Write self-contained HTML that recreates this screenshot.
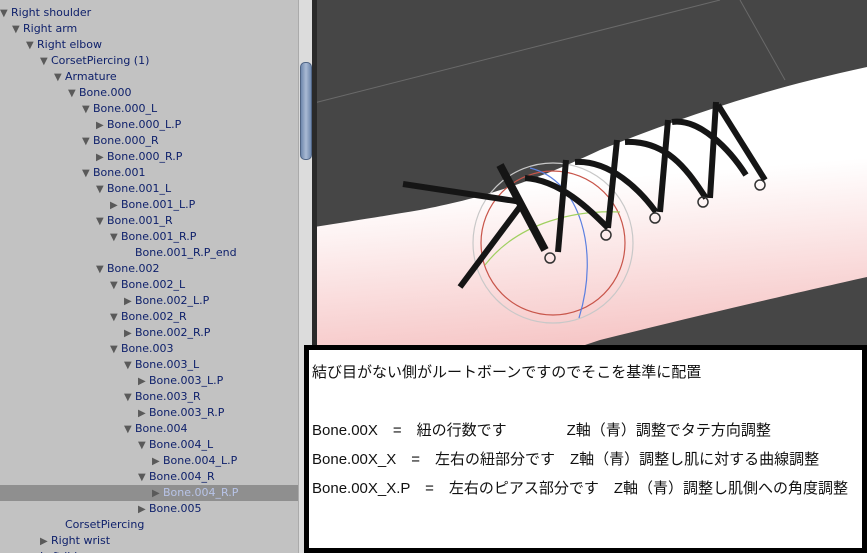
<!DOCTYPE html>
<html><head><meta charset="utf-8"><style>
body{margin:0;width:867px;height:553px;overflow:hidden;position:relative;background:#464646;font-family:"Liberation Sans","DejaVu Sans",sans-serif}
#tree{position:absolute;left:0;top:0;width:298px;height:553px;background:#c2c2c2;overflow:hidden}
.r{position:absolute;height:16px;line-height:16px;font-size:11px;color:#0d1f6a;white-space:nowrap;font-family:"DejaVu Sans",sans-serif}
.r i{font-style:normal;color:#5a5a5a;font-size:10px;display:inline-block;width:10px;margin-right:1px}
.sel{position:absolute;left:0;top:485px;width:298px;height:16px;background:#8f8f8f}
#sb{position:absolute;left:298px;top:0;width:14px;height:553px;background:#dcdcdc;border-left:1px solid #aaa}
#thumb{position:absolute;left:300px;top:62px;width:10px;height:96px;border-radius:5px;background:linear-gradient(90deg,#6f88ad,#a9bad4,#6f88ad);border:1px solid #4f6484}
#split{position:absolute;left:312px;top:0;width:5px;height:553px;background:#2a2a2a}
#box{position:absolute;left:304px;top:345px;width:553px;height:198px;background:#fff;border:5px solid #000;font-family:"Liberation Sans","Noto Sans CJK JP",sans-serif;font-size:15px;color:#111}
#box div{position:absolute;left:3px;white-space:pre}
</style></head><body>
<svg style="position:absolute;left:0;top:0" width="867" height="553">
<defs><linearGradient id="g" x1="0" y1="0" x2="0.15" y2="1"><stop offset="0.45" stop-color="#fff"/><stop offset="1" stop-color="#f6c6c6"/></linearGradient></defs>
<line x1="314" y1="103" x2="720" y2="0" stroke="#6a6a6a" stroke-width="1"/>
<line x1="740" y1="0" x2="785" y2="80" stroke="#6a6a6a" stroke-width="1"/>
<path d="M314 227 C360 220 390 215 420 210 C470 200 520 188 600 150 C680 118 760 90 867 67 L867 277 C800 292 700 315 600 340 L540 360 L314 360 Z" fill="url(#g)"/>
<circle cx="553" cy="243" r="80" fill="none" stroke="#c8c8c8" stroke-width="1.2"/>
<circle cx="553" cy="243" r="72" fill="none" stroke="#c8554a" stroke-width="1.2"/>
<path d="M530 168 C580 180 600 250 579 318" fill="none" stroke="#5b7fe0" stroke-width="1.2"/>
<path d="M485 265 C520 220 580 210 620 212" fill="none" stroke="#a0d060" stroke-width="1.2"/>
<g stroke="#151515" stroke-linecap="butt" fill="none">
<line x1="403" y1="184" x2="522" y2="202" stroke-width="6"/>
<line x1="522" y1="204" x2="460" y2="287" stroke-width="6"/>
<path d="M500 165 L545 250" stroke-width="8"/>
<path d="M558 252 L566 160" stroke-width="6"/>
<path d="M525 178 C560 180 590 210 608 228" stroke-width="6"/>
<path d="M608 228 L617 140" stroke-width="6"/>
<path d="M575 162 C610 160 640 190 656 212" stroke-width="6"/>
<path d="M660 212 L668 120" stroke-width="6"/>
<path d="M625 142 C670 140 690 175 706 198" stroke-width="6"/>
<path d="M710 198 L716 102" stroke-width="6"/>
<path d="M672 122 C700 118 730 150 746 175" stroke-width="6"/>
<path d="M718 105 L765 180" stroke-width="6"/>
</g>
<g stroke="#333" stroke-width="1.5" fill="none">
<circle cx="550" cy="258" r="5"/><circle cx="606" cy="235" r="5"/><circle cx="655" cy="218" r="5"/><circle cx="703" cy="202" r="5"/><circle cx="760" cy="185" r="5"/>
</g>
</svg>
<div id="tree">
<div class="sel"></div>
<div class="r" style="left:0;top:-11px">Neck</div>
<div class="r" style="left:0;top:5px"><i>▼</i>Right shoulder</div>
<div class="r" style="left:12px;top:21px"><i>▼</i>Right arm</div>
<div class="r" style="left:26px;top:37px"><i>▼</i>Right elbow</div>
<div class="r" style="left:40px;top:53px"><i>▼</i>CorsetPiercing (1)</div>
<div class="r" style="left:54px;top:69px"><i>▼</i>Armature</div>
<div class="r" style="left:68px;top:85px"><i>▼</i>Bone.000</div>
<div class="r" style="left:82px;top:101px"><i>▼</i>Bone.000_L</div>
<div class="r" style="left:96px;top:117px"><i>▶</i>Bone.000_L.P</div>
<div class="r" style="left:82px;top:133px"><i>▼</i>Bone.000_R</div>
<div class="r" style="left:96px;top:149px"><i>▶</i>Bone.000_R.P</div>
<div class="r" style="left:82px;top:165px"><i>▼</i>Bone.001</div>
<div class="r" style="left:96px;top:181px"><i>▼</i>Bone.001_L</div>
<div class="r" style="left:110px;top:197px"><i>▶</i>Bone.001_L.P</div>
<div class="r" style="left:96px;top:213px"><i>▼</i>Bone.001_R</div>
<div class="r" style="left:110px;top:229px"><i>▼</i>Bone.001_R.P</div>
<div class="r" style="left:135px;top:245px">Bone.001_R.P_end</div>
<div class="r" style="left:96px;top:261px"><i>▼</i>Bone.002</div>
<div class="r" style="left:110px;top:277px"><i>▼</i>Bone.002_L</div>
<div class="r" style="left:124px;top:293px"><i>▶</i>Bone.002_L.P</div>
<div class="r" style="left:110px;top:309px"><i>▼</i>Bone.002_R</div>
<div class="r" style="left:124px;top:325px"><i>▶</i>Bone.002_R.P</div>
<div class="r" style="left:110px;top:341px"><i>▼</i>Bone.003</div>
<div class="r" style="left:124px;top:357px"><i>▼</i>Bone.003_L</div>
<div class="r" style="left:138px;top:373px"><i>▶</i>Bone.003_L.P</div>
<div class="r" style="left:124px;top:389px"><i>▼</i>Bone.003_R</div>
<div class="r" style="left:138px;top:405px"><i>▶</i>Bone.003_R.P</div>
<div class="r" style="left:124px;top:421px"><i>▼</i>Bone.004</div>
<div class="r" style="left:138px;top:437px"><i>▼</i>Bone.004_L</div>
<div class="r" style="left:152px;top:453px"><i>▶</i>Bone.004_L.P</div>
<div class="r" style="left:138px;top:469px"><i>▼</i>Bone.004_R</div>
<div class="r" style="left:152px;top:485px;color:#b8c4e8"><i>▶</i>Bone.004_R.P</div>
<div class="r" style="left:138px;top:501px"><i>▶</i>Bone.005</div>
<div class="r" style="left:65px;top:517px">CorsetPiercing</div>
<div class="r" style="left:40px;top:533px"><i>▶</i>Right wrist</div>
<div class="r" style="left:40px;top:549px">Left lid</div>
</div>
<div id="sb"></div><div id="thumb"></div><div id="split"></div>
<div id="box">
<div style="top:11px">結び目がない側がルートボーンですのでそこを基準に配置</div>
<div style="top:69px">Bone.00X　=　紐の行数です　　　　Z軸（青）調整でタテ方向調整</div>
<div style="top:98px">Bone.00X_X　=　左右の紐部分です　Z軸（青）調整し肌に対する曲線調整</div>
<div style="top:127px">Bone.00X_X.P　=　左右のピアス部分です　Z軸（青）調整し肌側への角度調整</div>
</div>
</body></html>
